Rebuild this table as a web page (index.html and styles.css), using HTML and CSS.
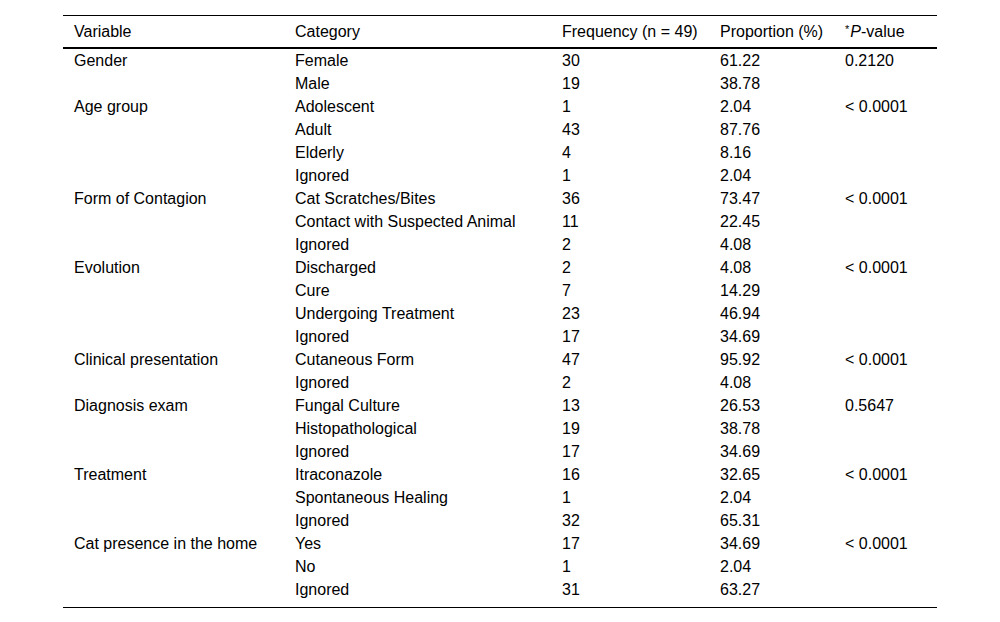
FILE: index.html
```html
<!DOCTYPE html>
<html>
<head>
<meta charset="utf-8">
<link rel="stylesheet" href="styles.css">
</head>
<body>
<div class="wrap">
<table class="data">
<colgroup>
<col class="c1"><col class="c2"><col class="c3"><col class="c4"><col class="c5">
</colgroup>
<thead>
<tr><th>Variable</th><th>Category</th><th>Frequency (n = 49)</th><th>Proportion (%)</th><th><sup class="ast">*</sup><i>P</i>-value</th></tr>
</thead>
<tbody>
<tr><td>Gender</td><td>Female</td><td>30</td><td>61.22</td><td>0.2120</td></tr>
<tr><td></td><td>Male</td><td>19</td><td>38.78</td><td></td></tr>
<tr><td>Age group</td><td>Adolescent</td><td>1</td><td>2.04</td><td>&lt; 0.0001</td></tr>
<tr><td></td><td>Adult</td><td>43</td><td>87.76</td><td></td></tr>
<tr><td></td><td>Elderly</td><td>4</td><td>8.16</td><td></td></tr>
<tr><td></td><td>Ignored</td><td>1</td><td>2.04</td><td></td></tr>
<tr><td>Form of Contagion</td><td>Cat Scratches/Bites</td><td>36</td><td>73.47</td><td>&lt; 0.0001</td></tr>
<tr><td></td><td>Contact with Suspected Animal</td><td>11</td><td>22.45</td><td></td></tr>
<tr><td></td><td>Ignored</td><td>2</td><td>4.08</td><td></td></tr>
<tr><td>Evolution</td><td>Discharged</td><td>2</td><td>4.08</td><td>&lt; 0.0001</td></tr>
<tr><td></td><td>Cure</td><td>7</td><td>14.29</td><td></td></tr>
<tr><td></td><td>Undergoing Treatment</td><td>23</td><td>46.94</td><td></td></tr>
<tr><td></td><td>Ignored</td><td>17</td><td>34.69</td><td></td></tr>
<tr><td>Clinical presentation</td><td>Cutaneous Form</td><td>47</td><td>95.92</td><td>&lt; 0.0001</td></tr>
<tr><td></td><td>Ignored</td><td>2</td><td>4.08</td><td></td></tr>
<tr><td>Diagnosis exam</td><td>Fungal Culture</td><td>13</td><td>26.53</td><td>0.5647</td></tr>
<tr><td></td><td>Histopathological</td><td>19</td><td>38.78</td><td></td></tr>
<tr><td></td><td>Ignored</td><td>17</td><td>34.69</td><td></td></tr>
<tr><td>Treatment</td><td>Itraconazole</td><td>16</td><td>32.65</td><td>&lt; 0.0001</td></tr>
<tr><td></td><td>Spontaneous Healing</td><td>1</td><td>2.04</td><td></td></tr>
<tr><td></td><td>Ignored</td><td>32</td><td>65.31</td><td></td></tr>
<tr><td>Cat presence in the home</td><td>Yes</td><td>17</td><td>34.69</td><td>&lt; 0.0001</td></tr>
<tr><td></td><td>No</td><td>1</td><td>2.04</td><td></td></tr>
<tr class="last"><td></td><td>Ignored</td><td>31</td><td>63.27</td><td></td></tr>
</tbody>
</table>
</div>
</body>
</html>
```
FILE: styles.css
```css
html, body {
  margin: 0;
  padding: 0;
  background: #fff;
}
body {
  font-family: "Liberation Sans", Arial, sans-serif;
  font-size: 16px;
  color: #000;
}
.wrap {
  padding: 15px 63px 0 63px;
}
.data {
  width: 874px;
  border-collapse: collapse;
  table-layout: fixed;
  border-top: 1px solid #000;
  border-bottom: 1px solid #000;
}
.c1 { width: 221px; }
.c2 { width: 267px; }
.c3 { width: 158px; }
.c4 { width: 125px; }
.c5 { width: 103px; }
.data th {
  font-weight: normal;
  text-align: left;
  height: 31px;
  padding: 0 11px;
  line-height: 31px;
  border-bottom: 2px solid #000;
  white-space: nowrap;
}
.data td {
  height: 23px;
  padding: 0 11px;
  line-height: 23px;
  white-space: nowrap;
}
.data tr.last td {
  padding-bottom: 6px;
}
.ast {
  font-size: 11px;
  vertical-align: 4px;
  line-height: 0;
  margin-right: 1px;
}
```
